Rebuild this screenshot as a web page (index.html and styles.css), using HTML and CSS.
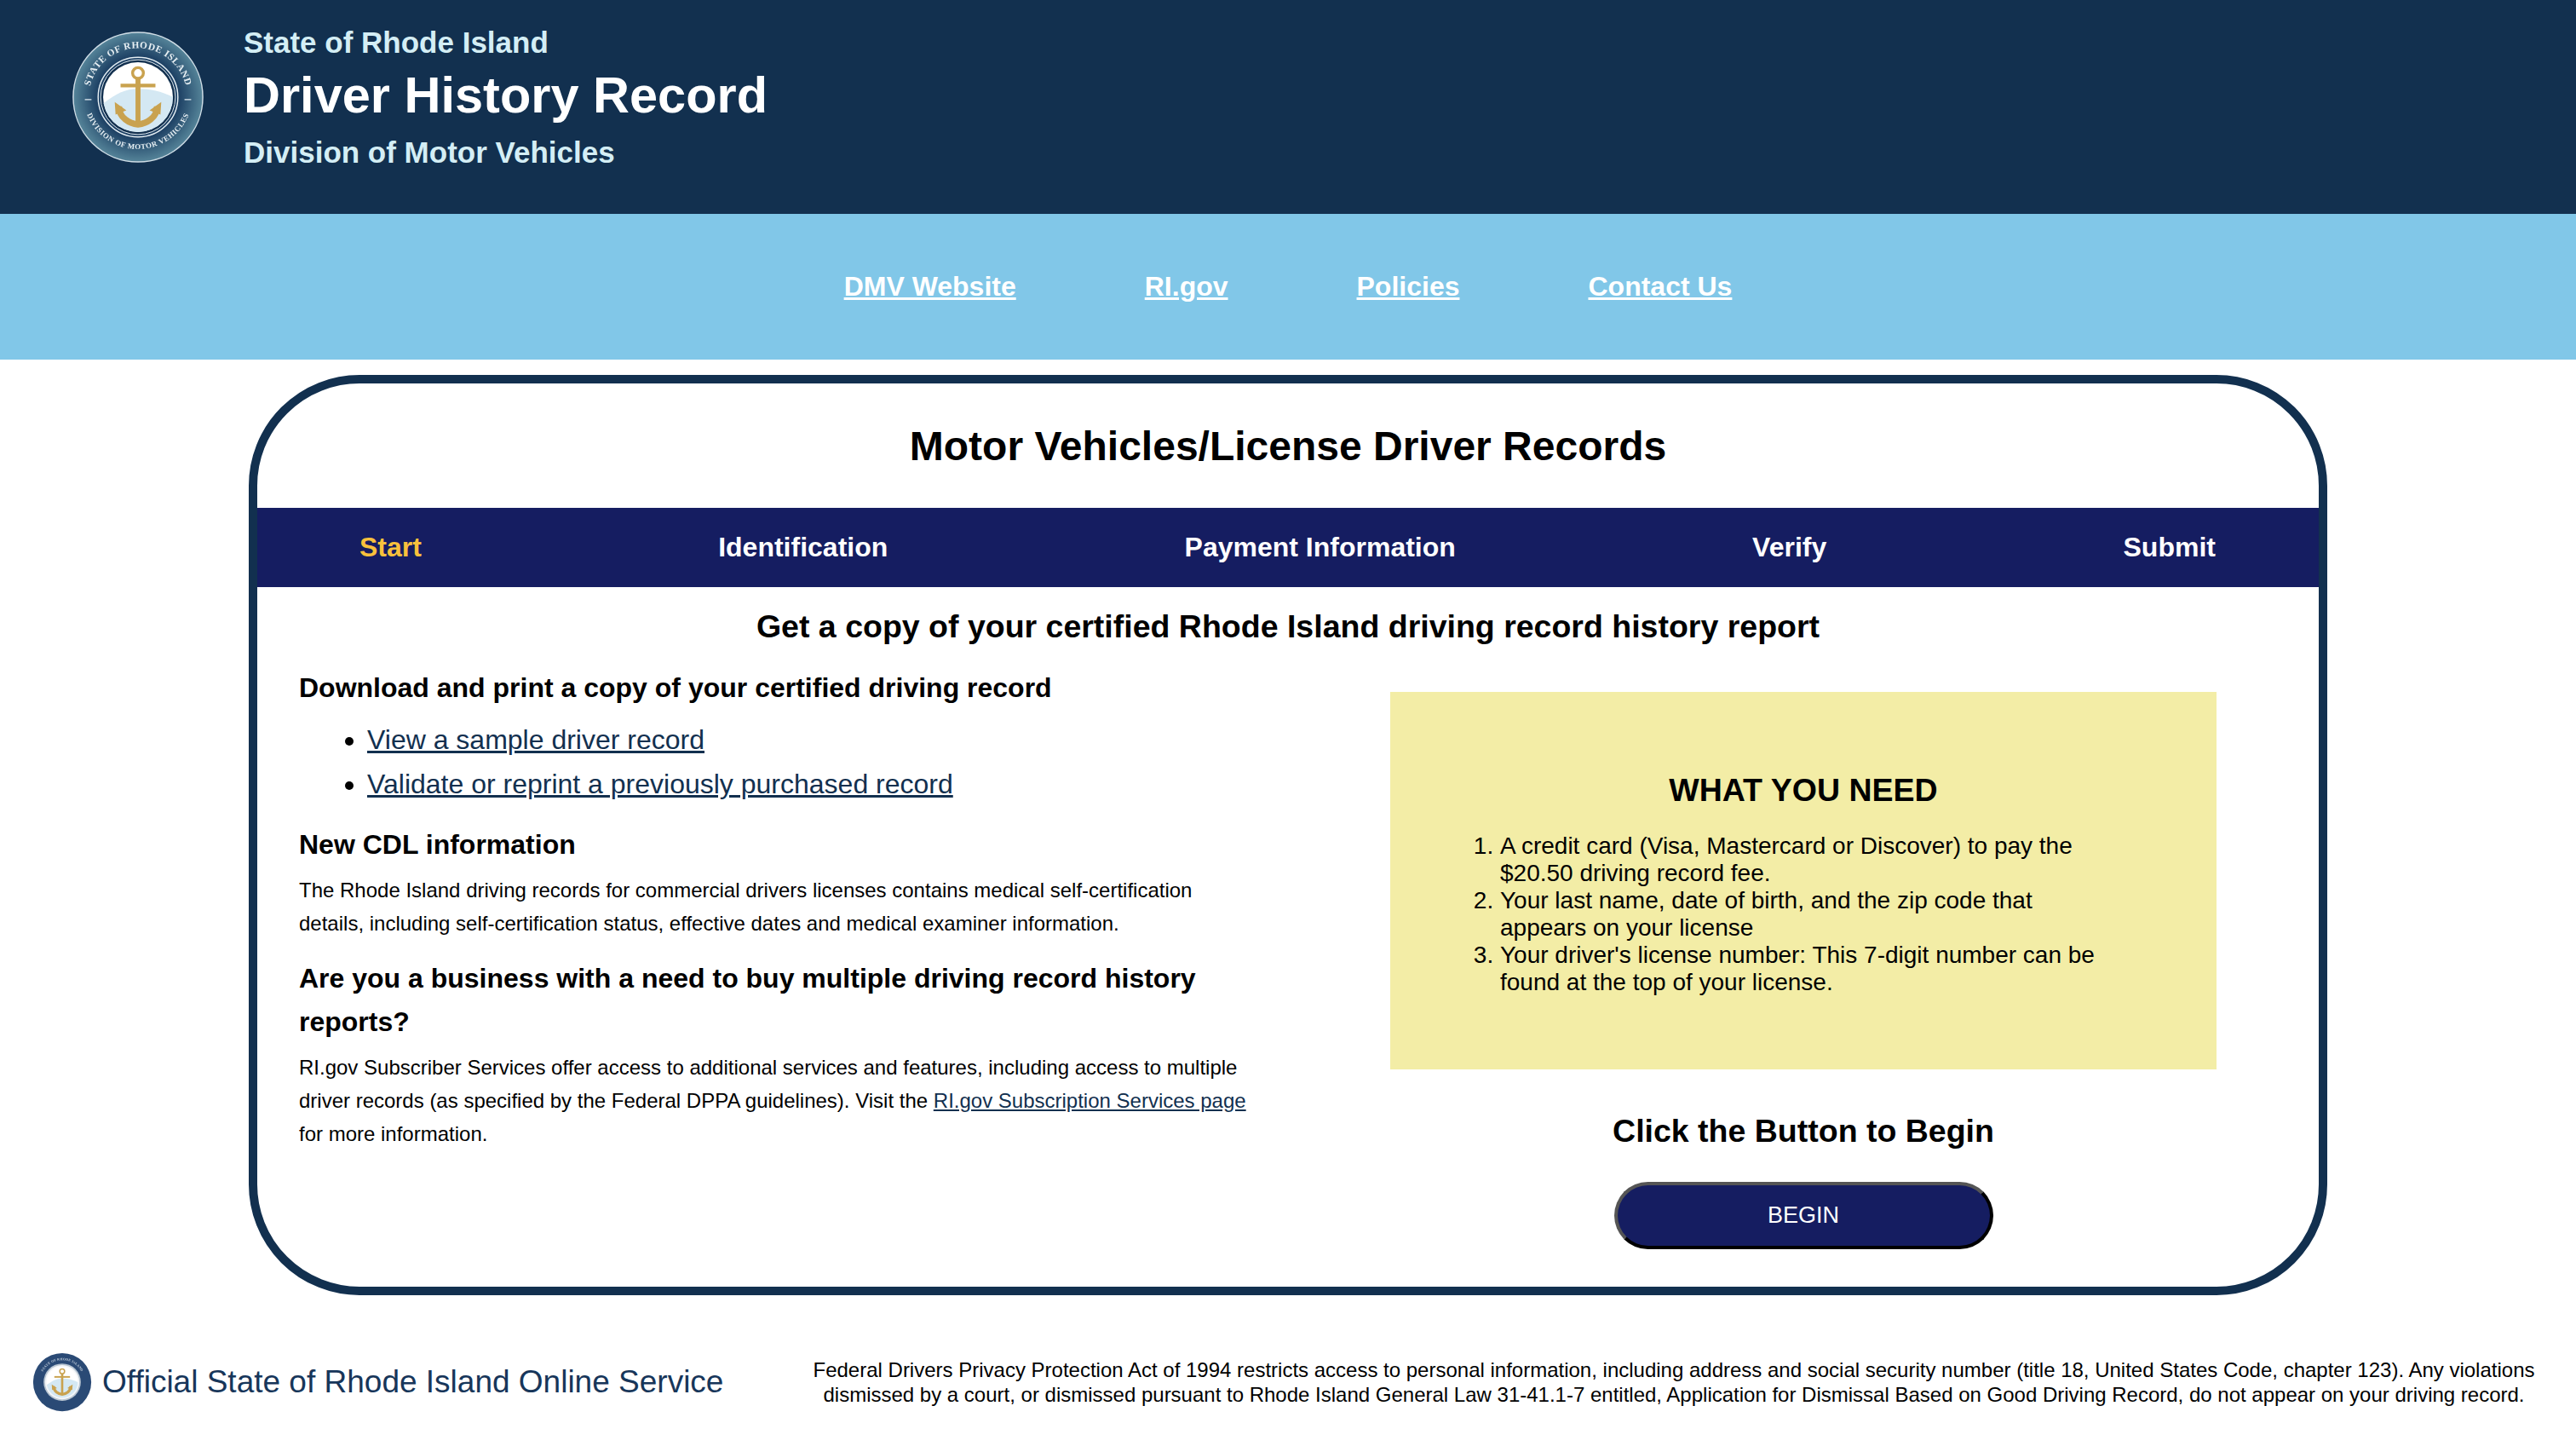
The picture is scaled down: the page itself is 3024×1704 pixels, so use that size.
FILE: index.html
```html
<!DOCTYPE html>
<html lang="en">
<head>
    <meta charset="UTF-8">
    <title>Driver History Record</title>
    <link rel="stylesheet" href="styles.css">
</head>
<body>
    <svg class="defs" width="0" height="0" aria-hidden="true">
        <defs>
            <radialGradient id="ringFill" cx="50%" cy="50%" r="50%">
                <stop offset="62%" stop-color="#1c3f63"/>
                <stop offset="100%" stop-color="#558499"/>
            </radialGradient>
            <clipPath id="innerClip"><circle cx="80" cy="80" r="42"/></clipPath>
            <path id="topArc" d="M 21 80 A 59 59 0 0 1 139 80"/>
            <path id="bottomArc" d="M 15 88 A 66 66 0 0 0 145 88"/>
            <g id="anchorMark">
                <circle cx="80" cy="80" r="42" fill="#fff"/>
                <path clip-path="url(#innerClip)" d="M30 94 C50 78 62 70 80 70 C98 70 112 74 130 84 L130 130 L30 130 Z" fill="#d4e8f3"/>
                <g fill="none" stroke="#c9a24f">
                    <circle cx="80" cy="51" r="6.5" stroke-width="3.5"/>
                    <path d="M59 66 H101" stroke-width="4.5"/>
                    <path d="M80 57 V112" stroke-width="6"/>
                    <path d="M57 91 C57 105 70 112 80 113 C90 112 103 105 103 91" stroke-width="7.5"/>
                </g>
                <path d="M52 86 L66 96 L53 101 Z M108 86 L94 96 L107 101 Z" fill="#c9a24f"/>
            </g>
        </defs>
    </svg>

    <header class="site-header">
        <div class="header-logo">
            <svg class="seal" viewBox="0 0 160 160" width="156" height="156">
                <circle cx="80" cy="80" r="78" fill="url(#ringFill)" stroke="#cfdde6" stroke-width="1.5"/>
                <text class="seal-text"><textPath href="#topArc" startOffset="50%" text-anchor="middle">STATE OF RHODE ISLAND</textPath></text>
                <text class="seal-text seal-text-small"><textPath href="#bottomArc" startOffset="50%" text-anchor="middle">DIVISION OF MOTOR VEHICLES</textPath></text>
                <path d="M16 83 H24 M136 83 H144" stroke="#e4eef3" stroke-width="1.2"/>
                <circle cx="80" cy="80" r="48" fill="none" stroke="#e4eef3" stroke-width="1.5"/>
                <circle cx="80" cy="80" r="45" fill="#12304f" stroke="#e4eef3" stroke-width="1"/>
                <use href="#anchorMark"/>
            </svg>
        </div>
        <div class="header-titles">
            <div class="header-state">State of Rhode Island</div>
            <div class="header-name">Driver History Record</div>
            <div class="header-division">Division of Motor Vehicles</div>
        </div>
    </header>

    <nav class="top-nav">
        <a href="#">DMV Website</a>
        <a href="#">RI.gov</a>
        <a href="#">Policies</a>
        <a href="#">Contact Us</a>
    </nav>

    <main class="card">
        <h1 class="card-title">Motor Vehicles/License Driver Records</h1>

        <div class="steps">
            <span class="step step-active">Start</span>
            <span class="step">Identification</span>
            <span class="step">Payment Information</span>
            <span class="step">Verify</span>
            <span class="step">Submit</span>
        </div>

        <h2 class="lead">Get a copy of your certified Rhode Island driving record history report</h2>

        <div class="columns">
            <section class="col-left">
                <h3 class="first">Download and print a copy of your certified driving record</h3>
                <ul class="links">
                    <li><a href="#">View a sample driver record</a></li>
                    <li><a href="#">Validate or reprint a previously purchased record</a></li>
                </ul>
                <h3>New CDL information</h3>
                <p>The Rhode Island driving records for commercial drivers licenses contains medical self-certification details, including self-certification status, effective dates and medical examiner information.</p>
                <h3>Are you a business with a need to buy multiple driving record history reports?</h3>
                <p>RI.gov Subscriber Services offer access to additional services and features, including access to multiple driver records (as specified by the Federal DPPA guidelines). Visit the <a href="#">RI.gov Subscription Services page</a> for more information.</p>
            </section>

            <section class="col-right">
                <div class="need-box">
                    <h4>WHAT YOU NEED</h4>
                    <ol>
                        <li>A credit card (Visa, Mastercard or Discover) to pay the $20.50 driving record fee.</li>
                        <li>Your last name, date of birth, and the zip code that appears on your license</li>
                        <li>Your driver's license number: This 7-digit number can be found at the top of your license.</li>
                    </ol>
                </div>
                <div class="begin-label">Click the Button to Begin</div>
                <button class="begin-btn" type="button">BEGIN</button>
            </section>
        </div>
    </main>

    <footer class="site-footer">
        <div class="footer-brand">
            <svg class="seal" viewBox="0 0 160 160" width="70" height="70">
                <circle cx="80" cy="80" r="78" fill="#2a4a75"/>
                <text class="seal-text seal-text-foot"><textPath href="#topArc" startOffset="50%" text-anchor="middle">STATE OF RHODE ISLAND</textPath></text>
                <circle cx="80" cy="80" r="50" fill="#b9c6d2"/>
                <circle cx="80" cy="80" r="46" fill="#f4f6f8"/>
                <use href="#anchorMark"/>
            </svg>
            <span class="footer-name">Official State of Rhode Island Online Service</span>
        </div>
        <p class="footer-legal">Federal Drivers Privacy Protection Act of 1994 restricts access to personal information, including address and social security number (title 18, United States Code, chapter 123). Any violations dismissed by a court, or dismissed pursuant to Rhode Island General Law 31-41.1-7 entitled, Application for Dismissal Based on Good Driving Record, do not appear on your driving record.</p>
    </footer>
</body>
</html>
```

FILE: styles.css
```css
html, body {
    padding: 0;
    margin: 0;
}

body {
    font-family: "Liberation Sans", Arial, sans-serif;
    color: #000;
    background: #fff;
    overflow: hidden;
}

.defs {
    display: block;
    height: 0;
}

/* top banner */
.site-header {
    height: 251px;
    background: #12304f;
    display: flex;
    align-items: flex-start;
    padding: 28px 0 0 84px;
    box-sizing: border-box;
}

.header-logo {
    width: 202px;
    padding-top: 8px;
}

.seal {
    display: block;
    filter: blur(0.6px);
}

.seal-text {
    font-family: "Liberation Serif", serif;
    font-weight: bold;
    font-size: 11.5px;
    letter-spacing: 0.6px;
    fill: #e8f0f4;
}

.seal-text-small {
    font-size: 9px;
}

.seal-text-foot {
    font-size: 9px;
    fill: #c6d2de;
}

.header-titles {
    display: flex;
    flex-direction: column;
    padding-top: 1px;
}

.header-state,
.header-division {
    color: #d4eef5;
    font-weight: bold;
    font-size: 35px;
    line-height: 42px;
}

.header-name {
    color: #fff;
    font-weight: bold;
    font-size: 59.5px;
    line-height: 70px;
    margin: 6px 0 11px;
}

/* light blue links */
.top-nav {
    height: 171px;
    background: #81c7e8;
    display: flex;
    align-items: center;
    justify-content: center;
    gap: 151px;
}

.top-nav a {
    color: #fff;
    font-weight: bold;
    font-size: 32px;
}

/* main card */
.card {
    width: 2440px;
    height: 1080px;
    box-sizing: border-box;
    margin: 18px auto 0;
    border: 10px solid #12304f;
    border-radius: 130px;
    overflow: hidden;
}

.card-title {
    height: 146px;
    margin: 0;
    display: flex;
    align-items: center;
    justify-content: center;
    font-size: 48px;
}

.steps {
    height: 93px;
    background: #151d61;
    display: flex;
    align-items: center;
    justify-content: space-between;
    padding: 0 121px 0 120px;
}

.step {
    color: #fff;
    font-weight: bold;
    font-size: 32px;
}

.step-active {
    color: #f8c13c;
}

.lead {
    margin: 0;
    padding-top: 23px;
    text-align: center;
    font-size: 37.5px;
    line-height: 46px;
}

.columns {
    display: flex;
    margin-top: 24px;
    padding-left: 49px;
    gap: 156px;
}

.col-left {
    width: 1125px;
}

.col-left h3 {
    font-size: 32px;
    line-height: 51px;
    margin: 20px 0 8px;
}

.col-left h3.first {
    margin: 0 0 9px;
}

.col-left p {
    margin: 0 0 1px;
    font-size: 24px;
    line-height: 39px;
}

.col-left a {
    color: #12304f;
}

.links {
    margin: 0;
    padding-left: 80px;
    font-size: 32px;
    line-height: 52px;
}

.col-right {
    width: 970px;
    padding-top: 30px;
    display: flex;
    flex-direction: column;
    align-items: center;
}

.need-box {
    width: 100%;
    height: 443px;
    box-sizing: border-box;
    background: #f3eda6;
    padding: 92px 112px 0 129px;
}

.need-box h4 {
    margin: 0 0 27px -17px;
    text-align: center;
    font-size: 37.5px;
    line-height: 46px;
}

.need-box ol {
    margin: 0;
    padding: 0;
    font-size: 28px;
    line-height: 32px;
}

.begin-label {
    margin-top: 50px;
    font-weight: bold;
    font-size: 37.5px;
    line-height: 44px;
}

.begin-btn {
    margin-top: 38px;
    width: 445px;
    height: 79px;
    box-sizing: border-box;
    background: #151d61;
    color: #fff;
    font-family: inherit;
    font-size: 27px;
    border: 4px solid;
    border-color: #555 #000 #000 #555;
    border-radius: 40px;
}

/* footer */
.site-footer {
    display: flex;
    align-items: center;
    padding: 67px 40px 0 38px;
}

.footer-brand {
    flex: 0 0 908px;
    display: flex;
    align-items: center;
    gap: 12px;
}

.footer-name {
    color: #17365a;
    font-size: 37px;
}

.footer-legal {
    flex: 1;
    margin: 0;
    text-align: center;
    font-size: 24px;
    line-height: 29px;
}
```
